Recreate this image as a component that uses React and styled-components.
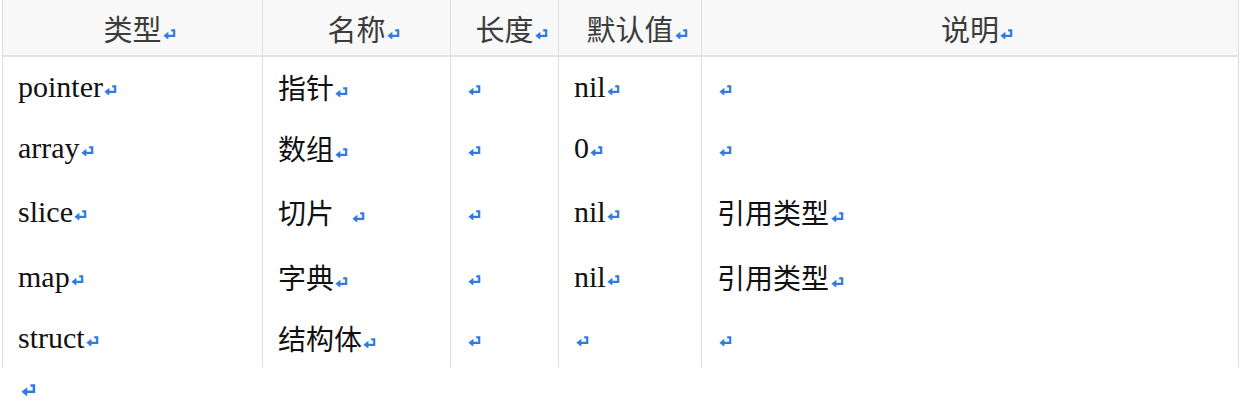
import React from "react";
import styled, { createGlobalStyle } from "styled-components";

const GlobalStyle = createGlobalStyle`
  html, body {
    margin: 0;
    padding: 0;
    background: #ffffff;
  }
`;

const Page = styled.div`
  width: 1240px;
  height: 411px;
  overflow: hidden;
  padding: 0 0 0 2px;
  box-sizing: border-box;
  font-family: "Liberation Serif", "Noto Sans CJK SC", serif;
  color: #111;
`;

const Table = styled.table`
  width: 1236px;
  border-collapse: collapse;
  table-layout: fixed;
`;

const Head = styled.th`
  height: 55px;
  padding: 0 16px;
  background: #f8f8f8;
  border-left: 1px solid #dedede;
  border-right: 1px solid #dedede;
  border-bottom: 2px solid #e2e2e2;
  font-family: "Noto Sans CJK SC", sans-serif;
  font-weight: 400;
  font-size: 29px;
  color: #3c3c3c;
  text-align: center;
  vertical-align: middle;
  white-space: nowrap;
`;

const Row = styled.tr`
  height: ${(p) => p.$h}px;
`;

const Cell = styled.td`
  padding: 0 15px;
  border-left: 1px solid #dedede;
  border-right: 1px solid #dedede;
  font-size: 30px;
  vertical-align: middle;
  white-space: nowrap;
`;

const Cjk = styled.span`
  font-family: "Noto Sans CJK SC", sans-serif;
  font-size: 28px;
`;

const MarkWrap = styled.span`
  display: inline-block;
  vertical-align: middle;
  margin-left: ${(p) => p.$gap ?? 1}px;
  margin-right: ${(p) => (p.$float ? -14 : 0)}px;
  line-height: 0;
`;

const After = styled.div`
  padding: 17px 0 0 19px;
  line-height: 0;
`;

function Mark({ gap, float, size = 13 }) {
  return (
    <MarkWrap $gap={gap} $float={float}>
      <svg width={size} height={size * 0.8} viewBox="0 0 13 10.4">
        <path d="M8.2 1.3 H11.2 V6.8 H4.8" fill="none" stroke="#2f7be3" strokeWidth="2.2" />
        <path d="M0.4 6.8 L5.4 2.8 V10.8 Z" fill="#2f7be3" />
      </svg>
    </MarkWrap>
  );
}

const heads = [
  { label: "类型", w: 260 },
  { label: "名称", w: 188 },
  { label: "长度", w: 108 },
  { label: "默认值", w: 143 },
  { label: "说明", w: 537 },
];

const rows = [
  { h: 61, type: "pointer", name: "指针", def: "nil", note: "" },
  { h: 62, type: "array", name: "数组", def: "0", note: "" },
  { h: 66, type: "slice", name: "切片", def: "nil", note: "引用类型", spaced: true },
  { h: 64, type: "map", name: "字典", def: "nil", note: "引用类型" },
  { h: 58, type: "struct", name: "结构体", def: "", note: "" },
];

export default function App() {
  return (
    <>
      <GlobalStyle />
      <Page>
        <Table>
          <colgroup>
            {heads.map((c) => (
              <col key={c.label} style={{ width: c.w }} />
            ))}
          </colgroup>
          <thead>
            <tr>
              {heads.map((c) => (
                <Head key={c.label}>
                  {c.label}
                  <Mark float gap={1} />
                </Head>
              ))}
            </tr>
          </thead>
          <tbody>
            {rows.map((r) => (
              <Row key={r.type} $h={r.h}>
                <Cell>
                  {r.type}
                  <Mark />
                </Cell>
                <Cell>
                  <Cjk>{r.name}</Cjk>
                  <Mark gap={r.spaced ? 18 : 1} />
                </Cell>
                <Cell>
                  <Mark gap={2} />
                </Cell>
                <Cell>
                  {r.def}
                  <Mark gap={r.def ? 1 : 2} />
                </Cell>
                <Cell>
                  {r.note && <Cjk>{r.note}</Cjk>}
                  <Mark gap={r.note ? 2 : 2} />
                </Cell>
              </Row>
            ))}
          </tbody>
        </Table>
        <After>
          <Mark gap={0} size={15} />
        </After>
      </Page>
    </>
  );
}
